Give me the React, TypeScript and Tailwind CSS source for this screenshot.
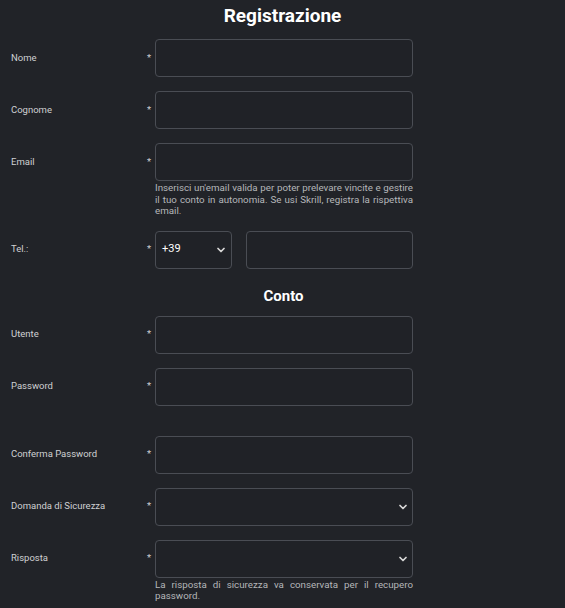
import { ChevronDown } from "lucide-react";

type Field = {
  label: string;
  kind?: "text" | "select" | "tel";
  help?: string;
  spacer?: boolean;
};

const personal: Field[] = [
  { label: "Nome" },
  { label: "Cognome" },
  {
    label: "Email",
    help: "Inserisci un'email valida per poter prelevare vincite e gestire il tuo conto in autonomia. Se usi Skrill, registra la rispettiva email.",
  },
  { label: "Tel.:", kind: "tel" },
];

const account: Field[] = [
  { label: "Utente" },
  { label: "Password", spacer: true },
  { label: "Conferma Password" },
  { label: "Domanda di Sicurezza", kind: "select" },
  {
    label: "Risposta",
    kind: "select",
    help: "La risposta di sicurezza va conservata per il recupero password.",
  },
];

const boxClass =
  "h-[38px] rounded-[4px] border border-[#4a4d54] bg-[#202227]";

const Row = ({ field }: { field: Field }) => (
  <div className="grid grid-cols-[136px_8px_258px]">
    <div className="flex h-[38px] items-center text-[9.5px] text-[#cfd0d2]">
      {field.label}
    </div>
    <div className="flex h-[38px] items-center text-[9.5px] text-[#cfd0d2]">*</div>
    <div>
      {field.kind === "tel" ? (
        <div className="flex gap-[14px]">
          <div className={`${boxClass} flex w-[77px] items-center justify-between pl-[6px] pr-[4px]`}>
            <span className="text-[11px] text-white">+39</span>
            <ChevronDown className="h-3 w-3 text-[#d8d8d8]" strokeWidth={3.5} />
          </div>
          <div className={`${boxClass} flex-1`} />
        </div>
      ) : field.kind === "select" ? (
        <div className={`${boxClass} flex items-center justify-end pr-[3px]`}>
          <ChevronDown className="h-3 w-3 text-[#d8d8d8]" strokeWidth={3.5} />
        </div>
      ) : (
        <div className={boxClass} />
      )}
      {field.help && (
        <p className="mt-[1px] text-justify text-[9.75px] leading-[11.5px] text-[#b5b7ba]">
          {field.help}
        </p>
      )}
      {field.spacer && <div className="h-[16px]" />}
    </div>
  </div>
);

export default function App() {
  return (
    <div
      className="min-h-[608px] bg-[#212328] px-[11px] pb-4"
      style={{ fontFamily: "Roboto, 'Liberation Sans', sans-serif" }}
    >
      <h1 className="pt-[4px] text-center text-[19px] font-bold leading-[24px] text-white">
        Registrazione
      </h1>
      <div className="mt-[11px] flex flex-col gap-[14px]">
        {personal.map((f) => (
          <Row key={f.label} field={f} />
        ))}
      </div>
      <h2 className="mt-[17px] ml-[2px] text-center text-[15px] font-bold leading-[20px] text-white">
        Conto
      </h2>
      <div className="mt-[10px] flex flex-col gap-[14px]">
        {account.map((f) => (
          <Row key={f.label} field={f} />
        ))}
      </div>
    </div>
  );
}
